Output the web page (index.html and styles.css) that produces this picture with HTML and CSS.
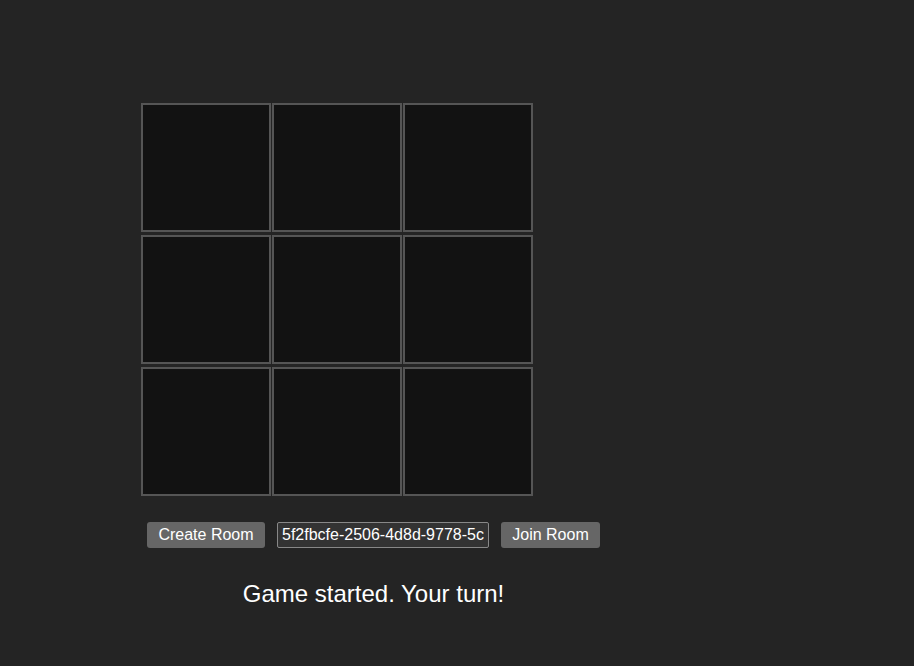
FILE: index.html
```html
<!DOCTYPE html>
<html>
<head>
<meta charset="utf-8">
<link rel="stylesheet" href="styles.css">
</head>
<body>
<div class="app">
  <div class="board">
    <div class="cell"></div><div class="cell"></div><div class="cell"></div>
    <div class="cell"></div><div class="cell"></div><div class="cell"></div>
    <div class="cell"></div><div class="cell"></div><div class="cell"></div>
  </div>
  <div class="controls">
    <button class="btn btn-create">Create Room</button>
    <input class="room-input" type="text" value="5f2fbcfe-2506-4d8d-9778-5c1a2b3d4e5f">
    <button class="btn btn-join">Join Room</button>
  </div>
  <div class="status">Game started. Your turn!</div>
</div>
</body>
</html>
```
FILE: styles.css
```css
html, body {
  margin: 0;
  padding: 0;
  background: #242424;
  font-family: "Liberation Sans", Arial, sans-serif;
  color: #ffffff;
}
.app {
  width: 465px;
  padding: 103px 0 0 141px;
}
.board {
  display: grid;
  grid-template-columns: repeat(3, 130px);
  grid-auto-rows: 129px;
  column-gap: 1px;
  row-gap: 3px;
  width: 392px;
}
.cell {
  background: #121212;
  border: 2px solid #555555;
}
.controls {
  display: flex;
  align-items: center;
  gap: 12px;
  margin-top: 26px;
  padding-left: 6px;
}
.btn {
  height: 26px;
  padding: 0;
  background: #666666;
  color: #ffffff;
  border: none;
  border-radius: 3px;
  font-family: "Liberation Sans", Arial, sans-serif;
  font-size: 16px;
}
.btn-create {
  width: 118px;
}
.btn-join {
  width: 99px;
}
.room-input {
  box-sizing: border-box;
  width: 212px;
  height: 26px;
  padding: 0 4px;
  background: #333333;
  color: #ffffff;
  border: 1px solid #888888;
  border-radius: 2px;
  font-family: "Liberation Sans", Arial, sans-serif;
  font-size: 16px;
  outline: none;
}
.status {
  text-align: center;
  font-size: 24px;
  line-height: 28px;
  margin-top: 32px;
}
```
